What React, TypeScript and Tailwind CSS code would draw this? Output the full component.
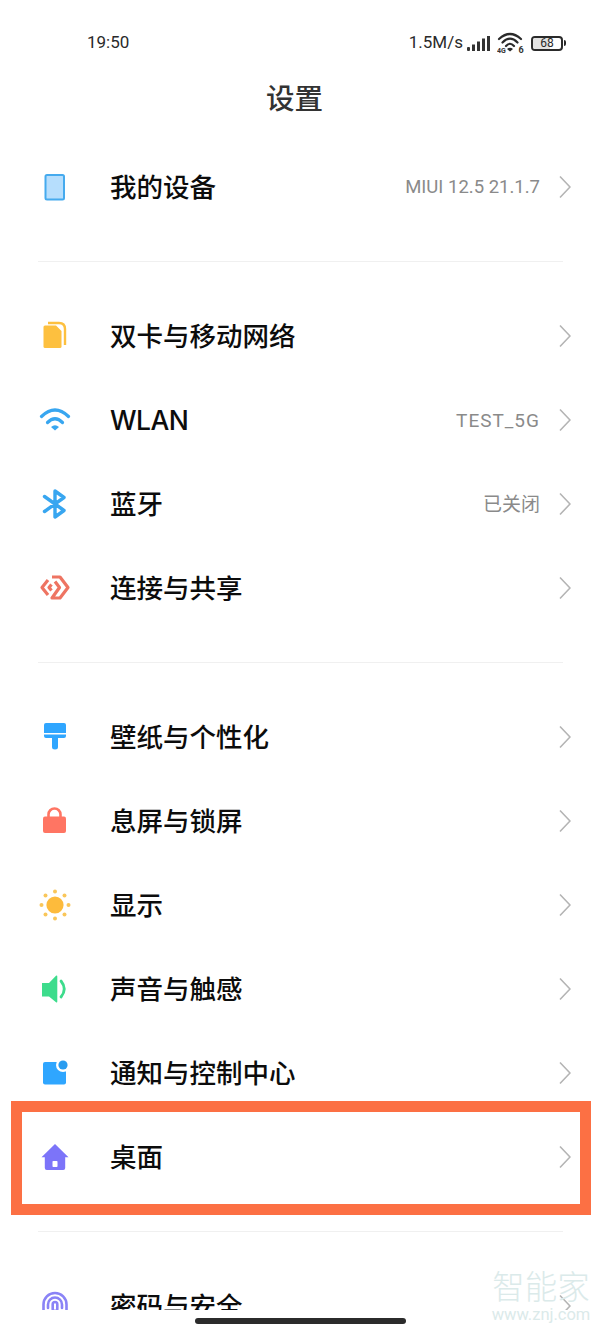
type RowItem = {
  label: string;
  labelClass?: string;
  value?: string;
  valueClass?: string;
  icon: React.ReactNode;
};

function Icon({ children }: { children: React.ReactNode }) {
  return (
    <svg viewBox="0 0 36 36" className="w-9 h-9 shrink-0">
      {children}
    </svg>
  );
}

const deviceIcon = (
  <Icon>
    <rect x="8.5" y="6" width="18.5" height="24.5" rx="1.5" fill="#b6defd" stroke="#45aaee" strokeWidth="2" />
  </Icon>
);

const simIcon = (
  <Icon>
    <path d="M8 7.5H19L24.5 13V28.5Q24.5 30 23 30H8Q6.5 30 6.5 28.5V9Q6.5 7.5 8 7.5Z" fill="#fdc03f" />
    <path d="M11 5H22Q28 5 28 11V27" fill="none" stroke="#fdc03f" strokeWidth="2.4" />
  </Icon>
);

const wifiIcon = (
  <Icon>
    <g fill="none" stroke="#38a6f0" strokeWidth="3.2" strokeLinecap="round">
      <path d="M4.5 14.5Q18 1.5 31.5 14.5" />
      <path d="M10.5 20.5Q18 13 25.5 20.5" />
    </g>
    <path d="M14 25Q18 21.5 22 25L18 28.5Z" fill="#38a6f0" />
  </Icon>
);

const bluetoothIcon = (
  <Icon>
    <path
      d="M7.5 10.5L27 24.5L18 31V5L27 11.5L7.5 25.5"
      fill="none"
      stroke="#38a6f0"
      strokeWidth="3.4"
      strokeLinejoin="round"
      strokeLinecap="round"
    />
  </Icon>
);

const connectIcon = (
  <Icon>
    <g fill="none" stroke="#ee7462" strokeWidth="3.2" strokeLinejoin="round">
      <path d="M15 7H23L31 17.5L23 28H15L22.5 17.5L18 11.5" />
      <path d="M11 10L5 17.5L11 25" />
      <path d="M14.5 14.5L12 17.5L14.5 20.5" />
    </g>
  </Icon>
);

const brushIcon = (
  <Icon>
    <path d="M9 4H27Q29 4 29 6V14H7V6Q7 4 9 4Z" fill="#2fa6ff" />
    <path d="M7 15.5H29V17Q29 19 27 19H21V28Q21 30.5 18 30.5Q15 30.5 15 28V19H9Q7 19 7 17Z" fill="#2fa6ff" />
  </Icon>
);

const lockIcon = (
  <Icon>
    <rect x="6" y="13.5" width="23" height="16.5" rx="2" fill="#ff7563" />
    <path d="M11.5 14V11.5A6 6 0 0 1 23.5 11.5V14" fill="none" stroke="#ff7563" strokeWidth="2.6" />
  </Icon>
);

const sunDots = [
  [18, 4.5],
  [27.5, 8.5],
  [31.5, 18],
  [27.5, 27.5],
  [18, 31.5],
  [8.5, 27.5],
  [4.5, 18],
  [8.5, 8.5],
];

const sunIcon = (
  <Icon>
    <circle cx="18" cy="18" r="8.6" fill="#fdbb3c" />
    {sunDots.map(([cx, cy]) => (
      <circle key={`${cx}-${cy}`} cx={cx} cy={cy} r="2" fill="#f9c65a" />
    ))}
  </Icon>
);

const soundIcon = (
  <Icon>
    <path d="M5 12H12L19 4.7Q20.3 3.8 20.3 5.5V30.5Q20.3 32.2 19 31.3L12 25.5H5Z" fill="#3ddc8c" />
    <path d="M24 10Q30.5 18 24 26" fill="none" stroke="#3ddc8c" strokeWidth="2.8" strokeLinecap="round" />
  </Icon>
);

const notifyIcon = (
  <Icon>
    <rect x="6" y="7" width="23" height="22.5" rx="2" fill="#2fa6ff" />
    <circle cx="26" cy="10" r="7" fill="#ffffff" />
    <circle cx="26" cy="10" r="4.6" fill="#2a9df0" />
  </Icon>
);

const homeIcon = (
  <Icon>
    <path
      d="M18 5L31.5 18.3H28.2V29Q28.2 31 26.2 31H9.8Q7.8 31 7.8 29V18.3H4.5Z"
      fill="#7c74f9"
      strokeLinejoin="round"
    />
    <rect x="15.5" y="22" width="5" height="6" rx="0.8" fill="#ffffff" />
  </Icon>
);

const fingerprintIcon = (
  <Icon>
    <g fill="none" stroke="#8a83f6" strokeWidth="2.6" strokeLinecap="round">
      <path d="M6.5 22V16.5A11.5 11.5 0 0 1 29.5 16.5V22" />
      <path d="M11 20V16.5A7 7 0 0 1 25 16.5V20" />
      <rect x="15.7" y="14" width="4.6" height="9" rx="2.3" />
    </g>
  </Icon>
);

const groups: RowItem[][] = [
  [{ label: "我的设备", value: "MIUI 12.5 21.1.7", valueClass: "text-[18.5px]", icon: deviceIcon }],
  [
    { label: "双卡与移动网络", icon: simIcon },
    { label: "WLAN", labelClass: "tracking-[-0.5px]", value: "TEST_5G", valueClass: "text-[19px] tracking-[1px]", icon: wifiIcon },
    { label: "蓝牙", value: "已关闭", valueClass: "text-[19px]", icon: bluetoothIcon },
    { label: "连接与共享", icon: connectIcon },
  ],
  [
    { label: "壁纸与个性化", icon: brushIcon },
    { label: "息屏与锁屏", icon: lockIcon },
    { label: "显示", icon: sunIcon },
    { label: "声音与触感", icon: soundIcon },
    { label: "通知与控制中心", icon: notifyIcon },
    { label: "桌面", icon: homeIcon },
  ],
  [{ label: "密码与安全", icon: fingerprintIcon }],
];

function Row({ item }: { item: RowItem }) {
  return (
    <div className="h-[84px] shrink-0 flex items-center pl-[37px] pr-[29px]">
      {item.icon}
      <span
        className={`ml-[37px] text-[26.5px] font-medium text-[#0c0c0c] leading-none font-['Inter','Noto_Sans_CJK_SC',sans-serif] ${item.labelClass ?? ""}`}
      >
        {item.label}
      </span>
      {item.value && <span className={`ml-auto pt-[2px] text-[#8a8a8a] ${item.valueClass ?? ""}`}>{item.value}</span>}
      <svg
        viewBox="0 0 12 24"
        className={`w-3 h-6 shrink-0 ${item.value ? "ml-[19px]" : "ml-auto"}`}
        fill="none"
        stroke="#b4b4b4"
        strokeWidth="1.6"
      >
        <path d="M1 1.5L11 12L1 22.5" />
      </svg>
    </div>
  );
}

function StatusBar() {
  return (
    <div className="mt-[33px] h-[20px] flex items-center pl-[87px] pr-[34px] text-[17px] text-[#2a2a2a]">
      <span>19:50</span>
      <span className="ml-auto">1.5M/s</span>
      <svg viewBox="0 0 25 17" className="ml-[3px] w-[25px] h-[17px]" fill="#333333">
        <rect x="1" y="12" width="3" height="4" rx="1" />
        <rect x="6" y="9.5" width="3" height="6.5" />
        <rect x="11" y="6.5" width="3" height="9.5" />
        <rect x="16" y="3.5" width="3" height="12.5" />
        <rect x="21" y="1" width="3" height="15" />
      </svg>
      <svg viewBox="0 0 28 22" className="ml-[6px] w-[28px] h-[22px]">
        <g fill="none" stroke="#2a2a2a" strokeWidth="2.2" strokeLinecap="round">
          <path d="M2 7Q13 -3 24 7" />
          <path d="M5.5 10.5Q13 3 20.5 10.5" />
          <path d="M9 14Q13 9.5 17 14" />
        </g>
        <path d="M10 17Q13 14.5 16 17L13 19.5Z" fill="#2a2a2a" />
        <text x="0" y="21" fontSize="7" fontWeight="700" fill="#333333">4G</text>
        <text x="21.5" y="21" fontSize="9" fontWeight="700" fill="#333333">6</text>
      </svg>
      <div className="ml-[6px] flex items-center">
        <div className="w-[32px] h-[15px] rounded-[4px] border-2 border-[#2a2a2a] relative overflow-hidden flex items-center justify-center">
          <div className="absolute left-0 top-0 bottom-0 w-[62%] bg-[#e2e2e2]" />
          <span className="relative text-[12px] leading-none">68</span>
        </div>
        <div className="ml-[1px] w-[2px] h-[6px] rounded-r-sm bg-[#2a2a2a]" />
      </div>
    </div>
  );
}

export default function App() {
  return (
    <div className="relative w-[600px] h-[1333px] overflow-hidden bg-white flex flex-col font-['Roboto','Noto_Sans_CJK_SC',sans-serif]">
      <StatusBar />
      <h1 className="mt-[27px] h-[40px] pr-[11px] flex items-center justify-center text-[28.5px] font-medium text-[#333333]">
        设置
      </h1>

      <div className="mt-[25px] flex-1 min-h-0 overflow-hidden flex flex-col">
        {groups.map((rows, i) => (
          <div key={rows[0].label} className="shrink-0">
            {i > 0 && <div className="ml-[38px] mr-[37px] my-[32px] h-px bg-[#f0f0f0]" />}
            {rows.map((item) => (
              <Row key={item.label} item={item} />
            ))}
          </div>
        ))}
      </div>

      <div className="h-[23px] shrink-0 flex justify-center pt-[8px]">
        <div className="w-[211px] h-[6px] rounded-full bg-[#2b2b2b]" />
      </div>

      {/* callout frame around the 桌面 row */}
      <div className="absolute left-[11px] top-[1101px] w-[580px] h-[114px] border-[11px] border-[#fc7044]" />

      {/* site stamp in the corner */}
      <div className="absolute left-[490px] top-[1270px] w-[102px] text-center text-[#dbeaea] pointer-events-none">
        <div className="text-[32.5px] leading-[36px] font-light">智能家</div>
        <div className="text-[16.5px] leading-[20px] mt-[-1px]">www.znj.com</div>
      </div>
    </div>
  );
}
